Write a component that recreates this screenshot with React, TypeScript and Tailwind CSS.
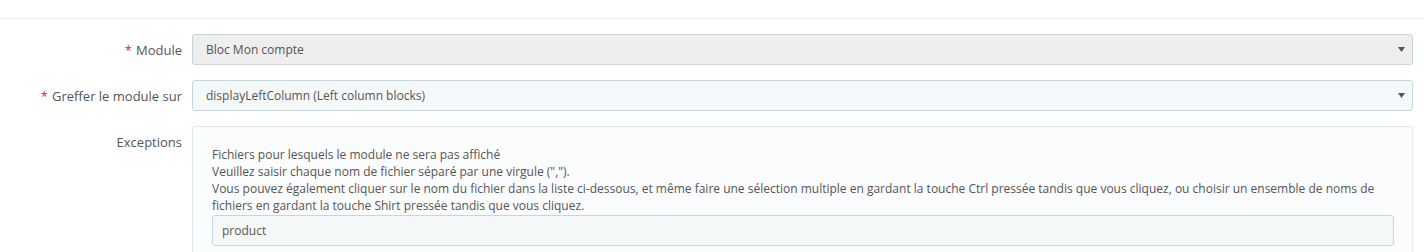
const font = { fontFamily: '"Open Sans", "Liberation Sans", sans-serif' }

const Arrow = () => (
  <svg width="7" height="5" viewBox="0 0 7 5" className="shrink-0">
    <path d="M0 0h7L3.5 5z" fill="#555" />
  </svg>
)

const Label = ({ text, required }: { text: string; required?: boolean }) => (
  <div className="w-[182px] shrink-0 pr-0 text-right text-[13px] leading-[18px] text-[#555]">
    {required && <span className="mr-1 text-[#e3262c]">*</span>}
    {text}
  </div>
)

const Select = ({ value, disabled }: { value: string; disabled?: boolean }) => (
  <div
    className={`flex h-[31px] flex-1 items-center justify-between rounded-[3px] border border-[#c7d6db] pl-[13px] pr-[7px] text-xs text-[#555] ${
      disabled ? "bg-[#eeeeee]" : "bg-[#f5f8f9]"
    }`}
  >
    <span>{value}</span>
    <Arrow />
  </div>
)

export default function App() {
  return (
    <div className="h-[252px] w-full overflow-hidden bg-white" style={font}>
      <div className="h-[19px] border-b border-[#eaeaea]" />
      <div className="flex flex-col gap-[15px] pr-[11px] pt-[15px]">
        <div className="flex items-center gap-[10px]">
          <Label text="Module" required />
          <Select value="Bloc Mon compte" disabled />
        </div>
        <div className="flex items-center gap-[10px]">
          <Label text="Greffer le module sur" required />
          <Select value="displayLeftColumn (Left column blocks)" />
        </div>
        <div className="flex items-start gap-[10px]">
          <div className="pt-[7px]">
            <Label text="Exceptions" />
          </div>
          <div className="flex-1 rounded-[3px] border border-[#e1e8ec] bg-[#fbfcfd] pb-6 pl-[19px] pr-[18px] pt-[19px]">
            <div className="text-xs leading-[17px] text-[#555]">
              <p>Fichiers pour lesquels le module ne sera pas affiché</p>
              <p>Veuillez saisir chaque nom de fichier séparé par une virgule (",").</p>
              <p>
                Vous pouvez également cliquer sur le nom du fichier dans la liste ci-dessous, et même faire une
                sélection multiple en gardant la touche Ctrl pressée tandis que vous cliquez, ou choisir un ensemble de
                noms de fichiers en gardant la touche Shirt pressée tandis que vous cliquez.
              </p>
            </div>
            <div className="mt-[1px] flex h-[31px] items-center rounded-[3px] border border-[#c7d6db] bg-[#f5f8f9] pl-[9px] text-xs text-[#555]">
              product
            </div>
          </div>
        </div>
      </div>
    </div>
  )
}
